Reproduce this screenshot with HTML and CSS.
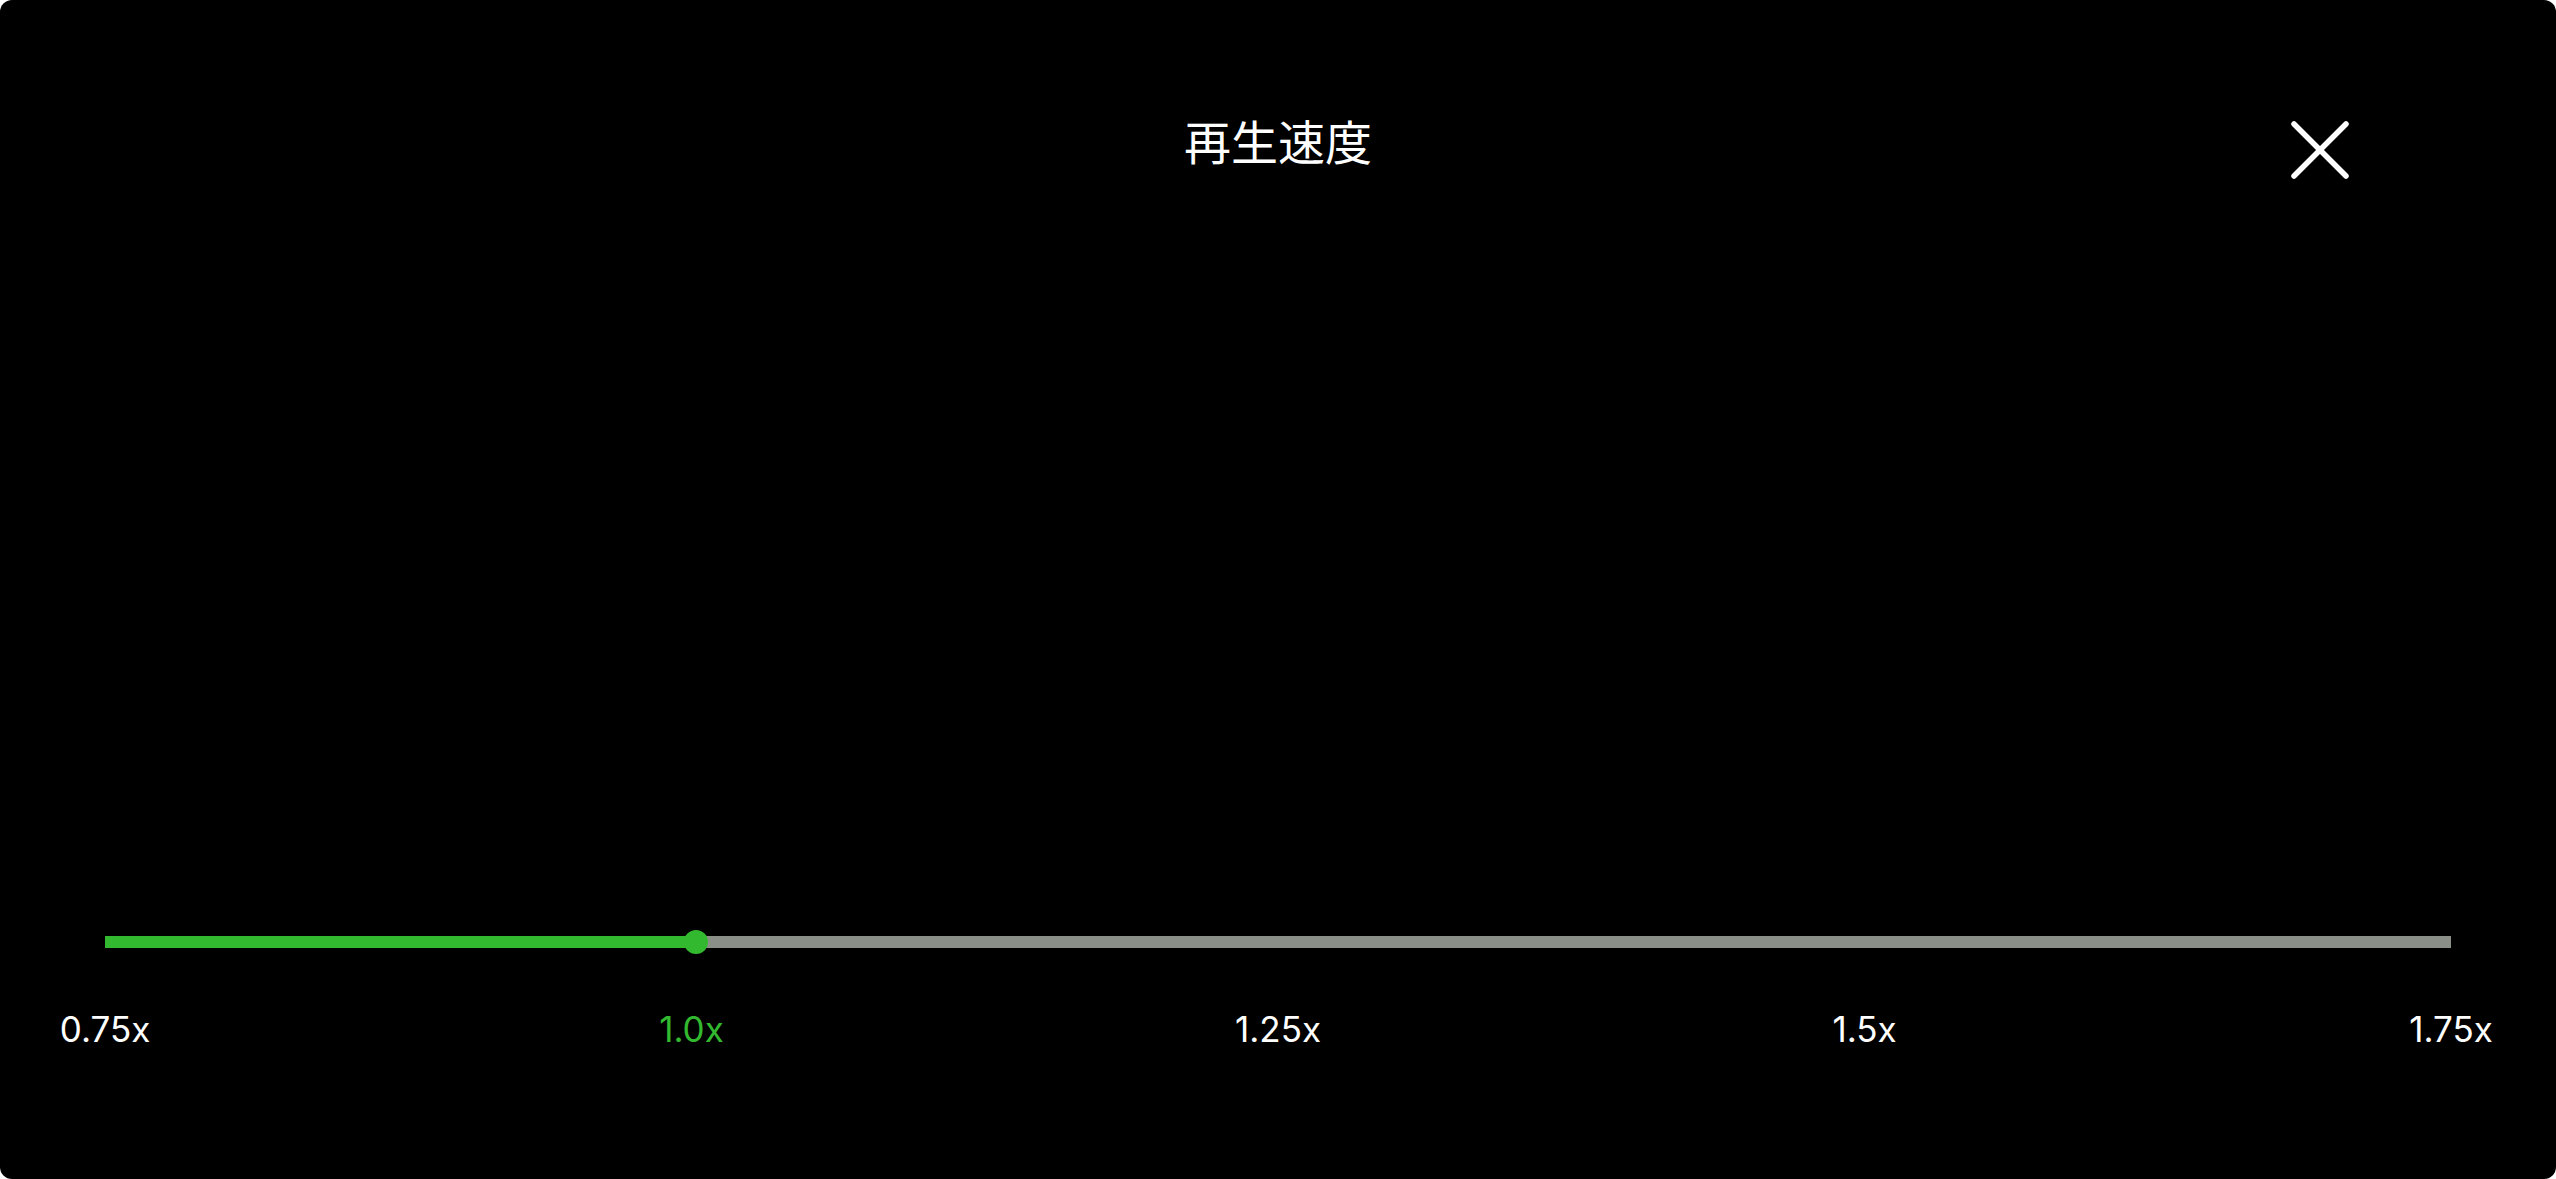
FILE: index.html
```html
<!DOCTYPE html>
<html lang="ja">
<head>
<meta charset="utf-8">
<title>再生速度</title>
<link rel="stylesheet" href="styles.css">
</head>
<body>
<div class="sheet">
  <header class="header">
    <div class="header-side"></div>
    <h1 class="title">再生速度</h1>
    <div class="header-side header-end">
      <button class="close" aria-label="閉じる">
        <svg viewBox="0 0 60 60" width="60" height="60" aria-hidden="true">
          <line x1="4" y1="4" x2="56" y2="56" />
          <line x1="56" y1="4" x2="4" y2="56" />
        </svg>
      </button>
    </div>
  </header>
  <main class="main">
    <div class="slider">
      <div class="track">
        <div class="fill" style="width: 25.2%"></div>
        <div class="knob" style="left: 25.2%"></div>
      </div>
    </div>
    <div class="labels">
      <div class="label"><span>0.75x</span></div>
      <div class="label active"><span>1.0x</span></div>
      <div class="label"><span>1.25x</span></div>
      <div class="label"><span>1.5x</span></div>
      <div class="label"><span>1.75x</span></div>
    </div>
  </main>
</div>
</body>
</html>
```
FILE: styles.css
```css
html, body {
  margin: 0;
  padding: 0;
  background: #ffffff;
}

.sheet {
  width: 100vw;
  height: 100vh;
  background: #000000;
  border-radius: 12px;
  display: flex;
  flex-direction: column;
  overflow: hidden;
  box-sizing: border-box;
}

.header {
  display: grid;
  grid-template-columns: 1fr auto 1fr;
  align-items: start;
  padding-top: 116px;
}

.title {
  margin: 0;
  font-family: "Noto Sans CJK JP", "Noto Sans", sans-serif;
  font-weight: 400;
  font-size: 47px;
  line-height: 47px;
  color: #ffffff;
  letter-spacing: 0;
}

.header-end {
  display: flex;
  justify-content: flex-end;
  padding-right: 206px;
}

.close {
  margin-top: 4px;
  width: 60px;
  height: 60px;
  padding: 0;
  border: 0;
  background: transparent;
  display: block;
  cursor: pointer;
}

.close svg {
  display: block;
}

.close line {
  stroke: #ffffff;
  stroke-width: 5.5;
  stroke-linecap: round;
}

.main {
  flex: 1;
  display: flex;
  flex-direction: column;
  justify-content: flex-end;
  padding: 0 105px 132px;
}

.slider {
  height: 24px;
  display: flex;
  align-items: center;
}

.track {
  position: relative;
  flex: 1;
  height: 12px;
  background: #8a9088;
}

.fill {
  height: 100%;
  background: #33b92f;
}

.knob {
  position: absolute;
  top: 50%;
  width: 24px;
  height: 24px;
  margin: -12px 0 0 -12px;
  border-radius: 50%;
  background: #33b92f;
}

.labels {
  margin-top: 58px;
  display: flex;
  justify-content: space-between;
}

.label {
  width: 0;
  display: flex;
  justify-content: center;
  font-family: "Inter", "Liberation Sans", sans-serif;
  font-weight: 400;
  font-size: 35px;
  line-height: 35px;
  color: #ffffff;
  white-space: nowrap;
}

.label.active {
  color: #33b92f;
}
```
